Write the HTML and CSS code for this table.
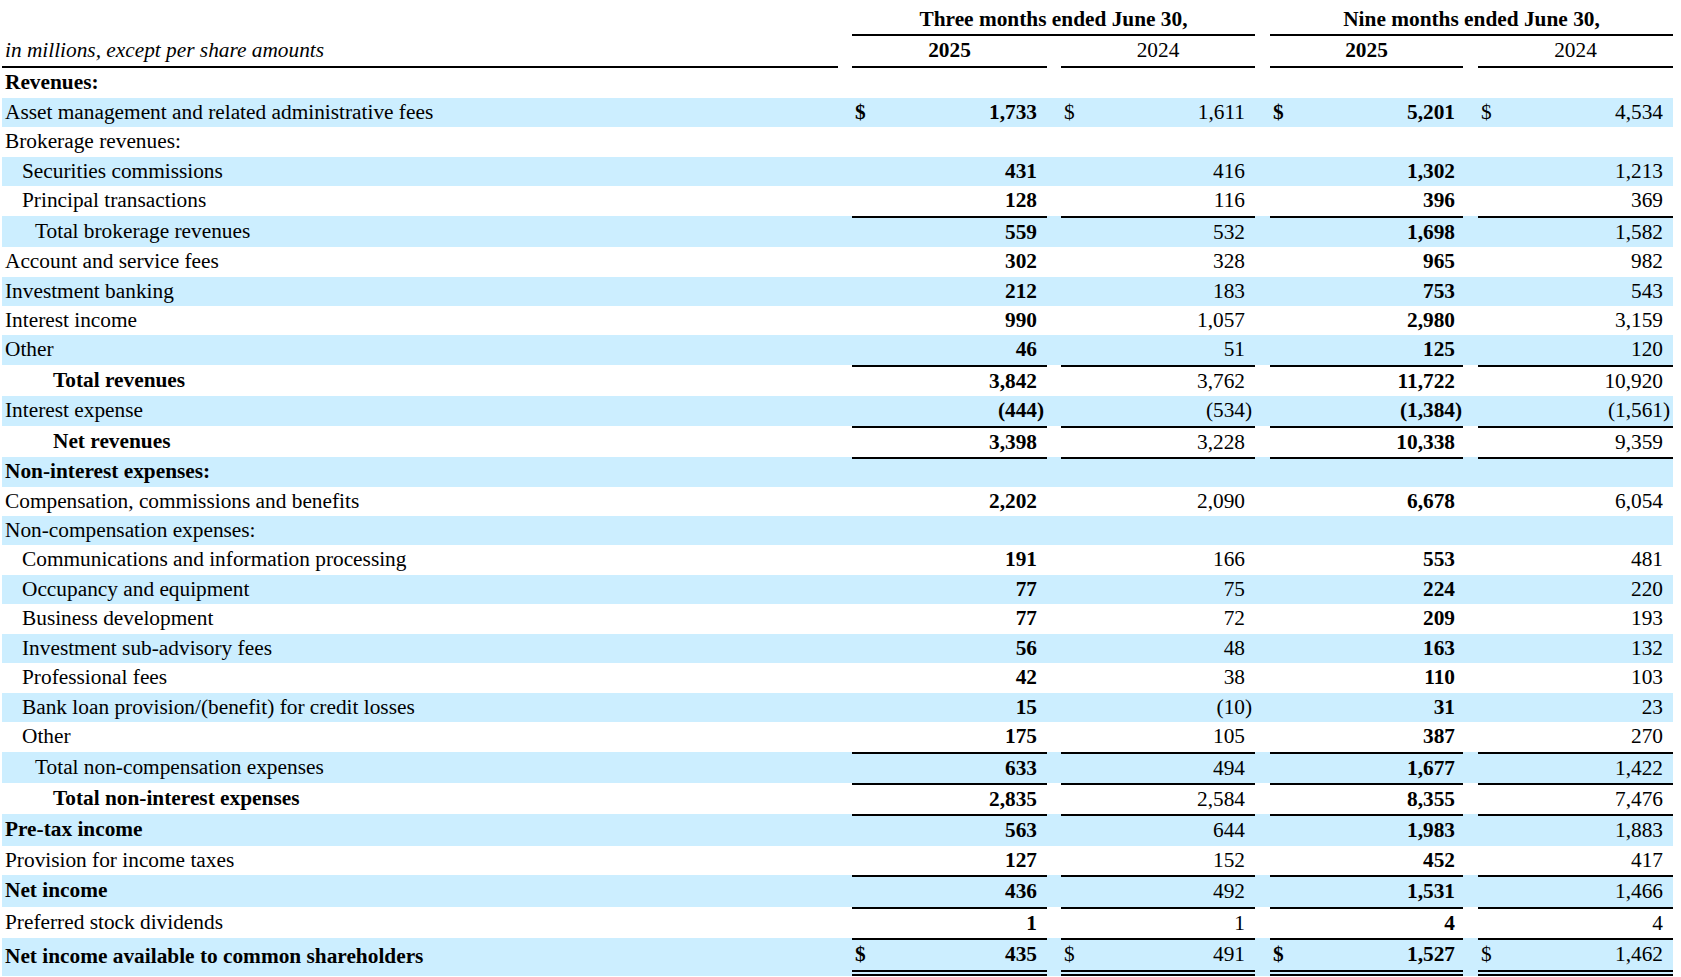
FILE: index.html
```html
<!DOCTYPE html>
<html>
<head>
<meta charset="utf-8">
<link rel="stylesheet" href="styles.css">
</head>
<body>
<table class="fin">
  <colgroup>
    <col class="c-label"><col class="c-sp"><col class="c-v1"><col class="c-sp"><col class="c-v2"><col class="c-sp2"><col class="c-v3"><col class="c-sp2"><col class="c-v4">
  </colgroup>
  <thead>
    <tr class="h1">
      <td></td><td></td>
      <th colspan="3" class="period">Three months ended June 30,</th>
      <td></td>
      <th colspan="3" class="period">Nine months ended June 30,</th>
    </tr>
    <tr class="h2">
      <td class="units">in millions, except per share amounts</td><td></td>
      <th class="yr b">2025</th><td></td>
      <th class="yr">2024</th><td></td>
      <th class="yr b">2025</th><td></td>
      <th class="yr">2024</th>
    </tr>
  </thead>
  <tbody>
    <tr><td class="lbl b">Revenues:</td><td></td><td></td><td></td><td></td><td></td><td></td><td></td><td></td></tr>
    <tr class="blue"><td class="lbl">Asset management and related administrative fees</td><td></td><td class="v b"><span class="cur">$</span>1,733</td><td></td><td class="v"><span class="cur">$</span>1,611</td><td></td><td class="v v3 b"><span class="cur">$</span>5,201</td><td></td><td class="v"><span class="cur">$</span>4,534</td></tr>
    <tr><td class="lbl">Brokerage revenues:</td><td></td><td></td><td></td><td></td><td></td><td></td><td></td><td></td></tr>
    <tr class="blue"><td class="lbl i1">Securities commissions</td><td></td><td class="v b">431</td><td></td><td class="v">416</td><td></td><td class="v v3 b">1,302</td><td></td><td class="v">1,213</td></tr>
    <tr><td class="lbl i1">Principal transactions</td><td></td><td class="v b">128</td><td></td><td class="v">116</td><td></td><td class="v v3 b">396</td><td></td><td class="v">369</td></tr>
    <tr class="blue top"><td class="lbl i2">Total brokerage revenues</td><td></td><td class="v b">559</td><td></td><td class="v">532</td><td></td><td class="v v3 b">1,698</td><td></td><td class="v">1,582</td></tr>
    <tr><td class="lbl">Account and service fees</td><td></td><td class="v b">302</td><td></td><td class="v">328</td><td></td><td class="v v3 b">965</td><td></td><td class="v">982</td></tr>
    <tr class="blue"><td class="lbl">Investment banking</td><td></td><td class="v b">212</td><td></td><td class="v">183</td><td></td><td class="v v3 b">753</td><td></td><td class="v">543</td></tr>
    <tr><td class="lbl">Interest income</td><td></td><td class="v b">990</td><td></td><td class="v">1,057</td><td></td><td class="v v3 b">2,980</td><td></td><td class="v">3,159</td></tr>
    <tr class="blue"><td class="lbl">Other</td><td></td><td class="v b">46</td><td></td><td class="v">51</td><td></td><td class="v v3 b">125</td><td></td><td class="v">120</td></tr>
    <tr class="top"><td class="lbl b i3">Total revenues</td><td></td><td class="v b">3,842</td><td></td><td class="v">3,762</td><td></td><td class="v v3 b">11,722</td><td></td><td class="v">10,920</td></tr>
    <tr class="blue"><td class="lbl">Interest expense</td><td></td><td class="v b">(444<span class="rp">)</span></td><td></td><td class="v">(534<span class="rp">)</span></td><td></td><td class="v v3 b">(1,384<span class="rp">)</span></td><td></td><td class="v">(1,561<span class="rp">)</span></td></tr>
    <tr class="top"><td class="lbl b i3">Net revenues</td><td></td><td class="v b">3,398</td><td></td><td class="v">3,228</td><td></td><td class="v v3 b">10,338</td><td></td><td class="v">9,359</td></tr>
    <tr class="blue top"><td class="lbl b">Non-interest expenses:</td><td></td><td class="v"></td><td></td><td class="v"></td><td></td><td class="v"></td><td></td><td class="v"></td></tr>
    <tr><td class="lbl">Compensation, commissions and benefits</td><td></td><td class="v b">2,202</td><td></td><td class="v">2,090</td><td></td><td class="v v3 b">6,678</td><td></td><td class="v">6,054</td></tr>
    <tr class="blue"><td class="lbl">Non-compensation expenses:</td><td></td><td></td><td></td><td></td><td></td><td></td><td></td><td></td></tr>
    <tr><td class="lbl i1">Communications and information processing</td><td></td><td class="v b">191</td><td></td><td class="v">166</td><td></td><td class="v v3 b">553</td><td></td><td class="v">481</td></tr>
    <tr class="blue"><td class="lbl i1">Occupancy and equipment</td><td></td><td class="v b">77</td><td></td><td class="v">75</td><td></td><td class="v v3 b">224</td><td></td><td class="v">220</td></tr>
    <tr><td class="lbl i1">Business development</td><td></td><td class="v b">77</td><td></td><td class="v">72</td><td></td><td class="v v3 b">209</td><td></td><td class="v">193</td></tr>
    <tr class="blue"><td class="lbl i1">Investment sub-advisory fees</td><td></td><td class="v b">56</td><td></td><td class="v">48</td><td></td><td class="v v3 b">163</td><td></td><td class="v">132</td></tr>
    <tr><td class="lbl i1">Professional fees</td><td></td><td class="v b">42</td><td></td><td class="v">38</td><td></td><td class="v v3 b">110</td><td></td><td class="v">103</td></tr>
    <tr class="blue"><td class="lbl i1">Bank loan provision/(benefit) for credit losses</td><td></td><td class="v b">15</td><td></td><td class="v">(10<span class="rp">)</span></td><td></td><td class="v v3 b">31</td><td></td><td class="v">23</td></tr>
    <tr><td class="lbl i1">Other</td><td></td><td class="v b">175</td><td></td><td class="v">105</td><td></td><td class="v v3 b">387</td><td></td><td class="v">270</td></tr>
    <tr class="blue top"><td class="lbl i2">Total non-compensation expenses</td><td></td><td class="v b">633</td><td></td><td class="v">494</td><td></td><td class="v v3 b">1,677</td><td></td><td class="v">1,422</td></tr>
    <tr class="top"><td class="lbl b i3">Total non-interest expenses</td><td></td><td class="v b">2,835</td><td></td><td class="v">2,584</td><td></td><td class="v v3 b">8,355</td><td></td><td class="v">7,476</td></tr>
    <tr class="blue top"><td class="lbl b">Pre-tax income</td><td></td><td class="v b">563</td><td></td><td class="v">644</td><td></td><td class="v v3 b">1,983</td><td></td><td class="v">1,883</td></tr>
    <tr><td class="lbl">Provision for income taxes</td><td></td><td class="v b">127</td><td></td><td class="v">152</td><td></td><td class="v v3 b">452</td><td></td><td class="v">417</td></tr>
    <tr class="blue top"><td class="lbl b">Net income</td><td></td><td class="v b">436</td><td></td><td class="v">492</td><td></td><td class="v v3 b">1,531</td><td></td><td class="v">1,466</td></tr>
    <tr class="top"><td class="lbl">Preferred stock dividends</td><td></td><td class="v b">1</td><td></td><td class="v">1</td><td></td><td class="v v3 b">4</td><td></td><td class="v">4</td></tr>
    <tr class="blue top dbl"><td class="lbl b">Net income available to common shareholders</td><td></td><td class="v b"><span class="cur">$</span>435</td><td></td><td class="v"><span class="cur">$</span>491</td><td></td><td class="v v3 b"><span class="cur">$</span>1,527</td><td></td><td class="v"><span class="cur">$</span>1,462</td></tr>
  </tbody>
</table>
</body>
</html>
```

FILE: styles.css
```css
html, body {
  margin: 0;
  padding: 0;
  background: #ffffff;
}

body {
  padding: 5px 0 0 2px;
  font-family: "Liberation Serif", "Times New Roman", serif;
  font-size: 21.33px;
  color: #000000;
}

.fin {
  table-layout: fixed;
  width: 1671px;
  border-collapse: separate;
  border-spacing: 0;
}

.c-label { width: 836px; }
.c-sp { width: 14px; }
.c-sp2 { width: 15px; }
.c-v1 { width: 195px; }
.c-v2 { width: 194px; }
.c-v3 { width: 193px; }
.c-v4 { width: 195px; }

.fin td, .fin th {
  padding: 0;
  line-height: 29.43px;
  white-space: nowrap;
  vertical-align: middle;
}

.fin th {
  font-weight: normal;
  text-align: center;
}

.fin .h1 .period {
  font-weight: bold;
  border-bottom: 2px solid #000;
}

.fin .h2 td, .fin .h2 th {
  line-height: 28px;
  padding-bottom: 2px;
  vertical-align: bottom;
}

.fin .h2 .units {
  font-style: italic;
  padding-left: 3px;
  border-bottom: 2px solid #000;
}

.fin .h2 .yr {
  border-bottom: 2px solid #000;
}

.fin .b { font-weight: bold; }

.blue { background: #cceeff; }

.fin .lbl { padding-left: 3px; }
.fin .lbl.i1 { padding-left: 20px; }
.fin .lbl.i2 { padding-left: 33px; }
.fin .lbl.i3 { padding-left: 51px; }

.fin .v {
  text-align: right;
  padding-right: 10px;
  padding-left: 3px;
}

.fin .v.v3 { padding-right: 8px; }

.cur { float: left; }

.rp { margin-right: -0.333em; }

.fin .top .v { border-top: 2px solid #000; }

.fin .dbl .v { border-bottom: 6px double #000; }
```
